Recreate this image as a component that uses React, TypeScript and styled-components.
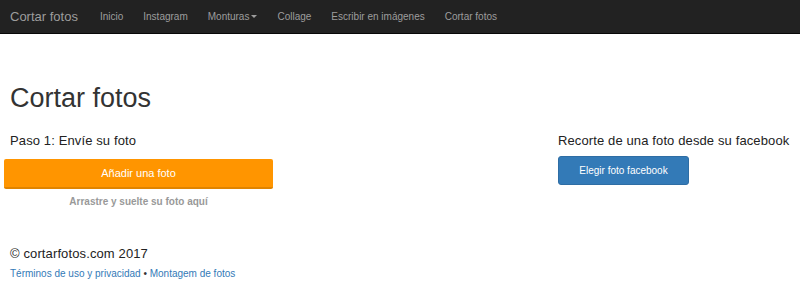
import React from "react";
import styled, { createGlobalStyle } from "styled-components";

const Global = createGlobalStyle`
  html, body { margin: 0; padding: 0; background: #fff; }
  body { font-family: "Liberation Sans", Arial, Helvetica, sans-serif; color: #333; }
  * { box-sizing: border-box; }
`;

const Navbar = styled.nav`
  height: 34px;
  background: #222;
  border-bottom: 1px solid #080808;
  display: flex;
  align-items: center;
  padding: 0 10px;
`;

const Brand = styled.a`
  font-size: 13px;
  color: #9d9d9d;
  margin-right: 22px;
  text-decoration: none;
`;

const NavItem = styled.a`
  font-size: 10px;
  color: #9d9d9d;
  text-decoration: none;
  margin-right: 20px;
  display: inline-flex;
  align-items: center;
`;

const Caret = styled.span`
  display: inline-block;
  width: 0;
  height: 0;
  margin-left: 2px;
  border-top: 3px solid #9d9d9d;
  border-left: 3px solid transparent;
  border-right: 3px solid transparent;
`;

const Main = styled.main`
  padding: 0 10px;
`;

const Title = styled.h1`
  font-size: 27px;
  font-weight: 400;
  margin: 50px 0 0;
  line-height: 1.1;
  color: #333;
`;

const Row = styled.div`
  display: grid;
  grid-template-columns: 548px 1fr;
  margin-top: 19px;
`;

const Col = styled.div`
  display: flex;
  flex-direction: column;
`;

const Heading = styled.h4`
  font-size: 13px;
  font-weight: 400;
  margin: 0;
  line-height: 16px;
  color: #222;
  white-space: nowrap;
  letter-spacing: 0.12px;
`;

const OrangeButton = styled.button`
  margin: 10px 0 0 -6px;
  width: 269px;
  height: 30px;
  background: #ff9500;
  border: none;
  border-bottom: 2px solid #e08400;
  border-radius: 2px;
  color: #fff;
  font-family: inherit;
  font-size: 11px;
  padding: 0;
`;

const Hint = styled.div`
  width: 269px;
  margin-left: -6px;
  text-align: center;
  font-size: 10px;
  font-weight: 700;
  color: #999;
  margin-top: 7px;
`;

const BlueButton = styled.button`
  margin-top: 7px;
  width: 131px;
  height: 29px;
  background: #337ab7;
  border: 1px solid #2e6da4;
  border-radius: 3px;
  color: #fff;
  font-family: inherit;
  font-size: 10px;
  padding: 0;
`;

const Footer = styled.footer`
  margin-top: 39px;
`;

const Links = styled.div`
  font-size: 10px;
  margin-top: 6px;
  color: #333;
`;

const Link = styled.a`
  color: #337ab7;
  text-decoration: none;
`;

export default function App() {
  return (
    <>
      <Global />
      <Navbar>
        <Brand href="#">Cortar fotos</Brand>
        <NavItem href="#">Inicio</NavItem>
        <NavItem href="#">Instagram</NavItem>
        <NavItem href="#">
          Monturas<Caret />
        </NavItem>
        <NavItem href="#">Collage</NavItem>
        <NavItem href="#">Escribir en imágenes</NavItem>
        <NavItem href="#">Cortar fotos</NavItem>
      </Navbar>
      <Main>
        <Title>Cortar fotos</Title>
        <Row>
          <Col>
            <Heading>Paso 1: Envíe su foto</Heading>
            <OrangeButton>Añadir una foto</OrangeButton>
            <Hint>Arrastre y suelte su foto aquí</Hint>
          </Col>
          <Col>
            <Heading>Recorte de una foto desde su facebook</Heading>
            <BlueButton>Elegir foto facebook</BlueButton>
          </Col>
        </Row>
        <Footer>
          <Heading>© cortarfotos.com 2017</Heading>
          <Links>
            <Link href="#">Términos de uso y privacidad</Link> •{" "}
            <Link href="#">Montagem de fotos</Link>
          </Links>
        </Footer>
      </Main>
    </>
  );
}
